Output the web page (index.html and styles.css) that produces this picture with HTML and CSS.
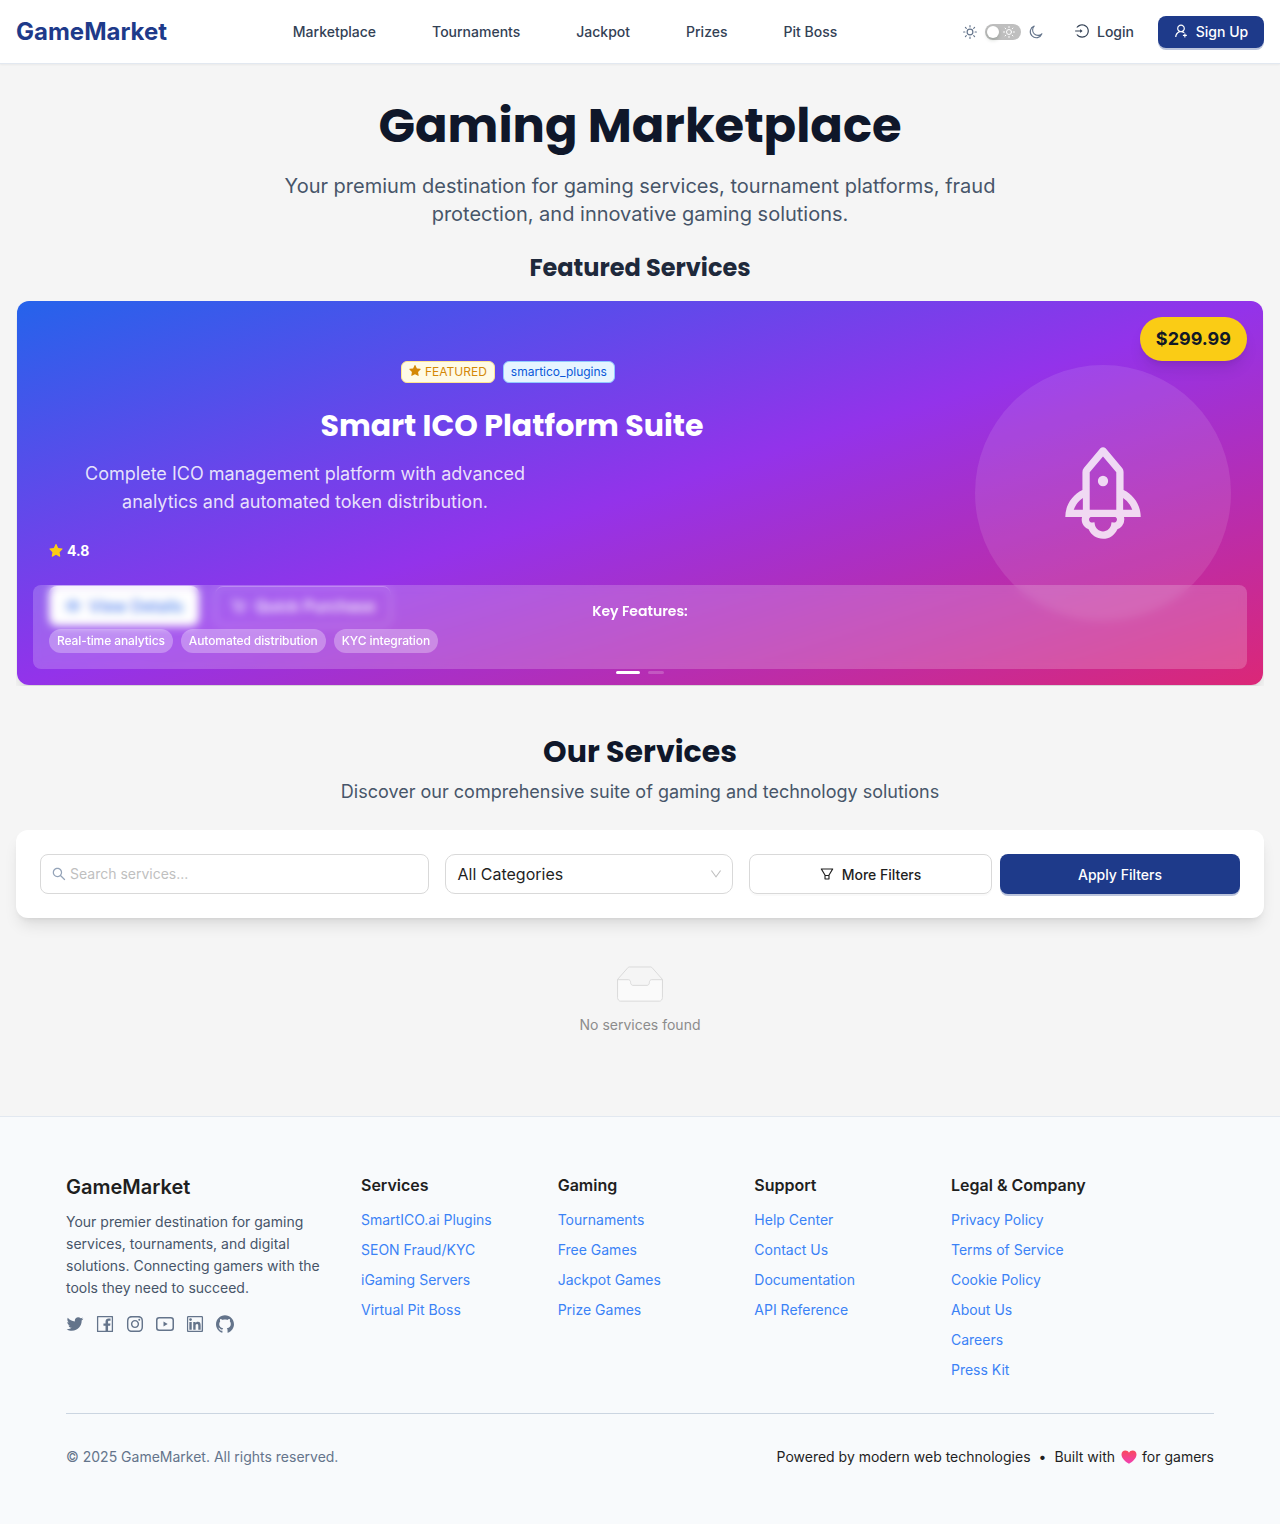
FILE: index.html
```html
<!DOCTYPE html>
<html lang="en">
<head>
<meta charset="utf-8">
<title>GameMarket</title>
<link rel="stylesheet" href="styles.css">
</head>
<body>
<svg class="sprite" aria-hidden="true">
  <symbol id="star" viewBox="64 64 896 896"><path d="M908.1 353.1l-253.9-36.9L540.7 86.1c-3.1-6.3-8.2-11.4-14.5-14.5-15.8-7.8-35-1.3-42.9 14.5L369.8 316.2l-253.9 36.9c-7 1-13.4 4.3-18.3 9.3a32.05 32.05 0 00.6 45.3l183.7 179.1-43.4 252.9a31.95 31.95 0 0046.4 33.7L512 754l227.1 119.4c6.2 3.3 13.4 4.4 20.3 3.2 17.4-3 29.1-19.5 26.1-36.9l-43.4-252.9 183.7-179.1c5-4.9 8.3-11.3 9.3-18.3 2.7-17.5-9.5-33.7-27-36.3z"/></symbol>
  <symbol id="sun" viewBox="0 0 14 14"><g fill="none" stroke="currentColor" stroke-width="1.15" stroke-linecap="round"><circle cx="7" cy="7" r="2.9"/><path d="M7 .6v1.3M7 12.1v1.3M.6 7h1.3M12.1 7h1.3M2.4 2.4l.9.9M10.7 10.7l.9.9M2.4 11.6l.9-.9M10.7 3.3l.9-.9"/></g></symbol>
  <symbol id="moon" viewBox="0 0 14 14"><path d="M5.2 1.1A6 6 0 1 0 12.9 8.8A5 5 0 0 1 5.2 1.1z" fill="none" stroke="currentColor" stroke-width="1.1" stroke-linejoin="round"/></symbol>
</svg>
<header class="header">
  <a class="logo">GameMarket</a>
  <nav class="nav"><a>Marketplace</a><a>Tournaments</a><a>Jackpot</a><a>Prizes</a><a>Pit Boss</a></nav>
  <div class="actions">
    <div class="theme">
      <svg class="i14"><use href="#sun"/></svg>
      <span class="switch"><span class="knob"></span><svg class="i12"><use href="#sun"/></svg></span>
      <svg class="i14"><use href="#moon"/></svg>
    </div>
    <a class="login"><svg class="i14" viewBox="64 64 896 896"><path d="M521.7 82c-152.5-.4-286.7 78.5-363.4 197.7-3.4 5.3.4 12.3 6.7 12.3h70.3c4.8 0 9.3-2.1 12.3-5.8 7-8.5 14.5-16.7 22.4-24.5 32.6-32.5 70.5-58.1 112.7-75.9 43.6-18.4 90-27.8 137.9-27.8 47.9 0 94.3 9.3 137.9 27.8 42.2 17.8 80.1 43.4 112.7 75.9 32.6 32.5 58.1 70.4 76 112.5C865.7 417.8 875 464.1 875 512c0 47.9-9.4 94.2-27.8 137.8-17.8 42.1-43.4 80-76 112.5s-70.5 58.1-112.7 75.9A352.8 352.8 0 01520.6 866c-47.9 0-94.3-9.4-137.9-27.8A353.84 353.84 0 01270 762.3c-7.9-7.9-15.3-16.1-22.4-24.5-3-3.7-7.6-5.8-12.3-5.8H165c-6.3 0-10.2 7-6.7 12.3C234.9 863.2 368.5 942 520.6 942c236.2 0 428-190.1 430.4-425.6C953.4 277.1 761.3 82.6 521.7 82zM395.02 624v-76h-314c-4.4 0-8-3.6-8-8v-56c0-4.4 3.6-8 8-8h314v-76c0-6.7 7.8-10.5 13-6.3l141.9 112a8 8 0 010 12.6l-141.9 112c-5.2 4.1-13 .4-13-6.3z"/></svg><span>Login</span></a>
    <a class="btn primary signup"><svg class="i14" viewBox="64 64 896 896"><path d="M678.3 642.4c24.2-13 51.9-20.4 81.4-20.4h.1c3 0 4.4-3.6 2.2-5.6a371.67 371.67 0 00-103.7-65.8c-.4-.2-.8-.3-1.2-.5C719.2 505 759.6 431.7 759.6 349c0-137-110.8-248-247.5-248S264.7 212 264.7 349c0 82.7 40.4 156 102.6 201.1-.4.2-.8.3-1.2.5-44.7 18.9-84.8 46-119.3 80.6a373.42 373.42 0 00-80.4 119.5A373.6 373.6 0 00137 888.8a8 8 0 008 8.2h59.9c4.3 0 7.9-3.5 8-7.8 2-77.2 32.9-149.5 87.6-204.3C357 628.2 432.2 597 512.2 597c56.7 0 111.1 15.7 158 45.1a8.1 8.1 0 008.1.3zM512.2 521c-45.8 0-88.9-17.9-121.4-50.4A171.2 171.2 0 01340.5 349c0-45.9 17.9-89.1 50.3-121.6S466.3 177 512.2 177s88.9 17.9 121.4 50.4A171.2 171.2 0 01683.9 349c0 45.9-17.9 89.1-50.3 121.6C601.1 503.1 558 521 512.2 521zM880 759h-84v-84c0-4.4-3.6-8-8-8h-56c-4.4 0-8 3.6-8 8v84h-84c-4.4 0-8 3.6-8 8v56c0 4.4 3.6 8 8 8h84v84c0 4.4 3.6 8 8 8h56c4.4 0 8-3.6 8-8v-84h84c4.4 0 8-3.6 8-8v-56c0-4.4-3.6-8-8-8z"/></svg><span>Sign Up</span></a>
  </div>
</header>
<main class="main">
  <h1 class="title">Gaming Marketplace</h1>
  <p class="lead">Your premium destination for gaming services, tournament platforms, fraud protection, and innovative gaming solutions.</p>
  <h2 class="featured-title">Featured Services</h2>
  <section class="carousel">
    <article class="slide">
      <div class="info">
        <div class="tags">
          <span class="tag gold"><svg class="i12"><use href="#star"/></svg>FEATURED</span>
          <span class="tag blue">smartico_plugins</span>
        </div>
        <h3 class="slide-title">Smart ICO Platform Suite</h3>
        <p class="slide-text">Complete ICO management platform with advanced analytics and automated token distribution.</p>
        <div class="rating"><svg class="i14"><use href="#star"/></svg><span>4.8</span></div>
        <div class="cta">
          <a class="view"><svg class="i16" viewBox="0 0 16 16"><path d="M1 8s2.500-4.500 7-4.500S15 8 15 8s-2.500 4.500-7 4.500S1 8 1 8z" fill="none" stroke="currentColor" stroke-width="1.300"/><circle cx="8" cy="8" r="2.300" fill="none" stroke="currentColor" stroke-width="1.300"/></svg>View Details</a>
          <a class="buy"><svg class="i16" viewBox="0 0 16 16"><path d="M1 2h2l1.500 8.500h8L14 4.500H3.700" fill="none" stroke="currentColor" stroke-width="1.300"/><circle cx="6" cy="13.300" r="1.200"/><circle cx="11.500" cy="13.300" r="1.200"/></svg>Quick Purchase</a>
        </div>
      </div>
      <div class="disc"><svg class="rocket" viewBox="64 64 896 896"><path d="M864 736c0-111.6-65.4-208-160-252.9V317.3c0-15.1-5.3-29.7-15.1-41.2L536.5 95.4C530.1 87.8 521 84 512 84s-18.1 3.8-24.5 11.4L335.1 276.1a63.97 63.97 0 00-15.1 41.2v165.800C225.4 528 160 624.4 160 736h156.5c-2.3 7.2-3.5 15-3.5 23.8 0 22.1 7.6 43.7 21.4 60.800a97.2 97.2 0 0043.1 30.6c23.1 54 75.6 88.8 134.5 88.8 29.1 0 57.3-8.6 81.4-24.8 23.6-15.8 41.9-37.9 53-64a97 97 0 0043.1-30.5 97.52 97.52 0 0021.4-60.8c0-8.4-1.1-16.4-3.1-23.8H864zM762.3 621.4c9.4 14.6 17 30.3 22.5 46.6H700V558.7a211.6 211.6 0 0162.3 62.7zM388 483.1V318.8l124-147 124 147V668H388V483.1zM239.2 668c5.5-16.3 13.1-32 22.5-46.6 16.3-25.2 37.5-46.5 62.3-62.7V668h-84.8zm388.9 116.2c-5.2 3-11.2 4.2-17.1 3.4l-19.5-2.4-2.8 19.4c-5.4 37.9-38.4 66.5-76.7 66.5-38.3 0-71.3-28.6-76.7-66.5l-2.8-19.5-19.5 2.5a27.7 27.7 0 01-17.1-3.5c-8.7-5-14.1-14.3-14.1-24.4 0-10.6 5.9-19.4 14.6-23.8h231.3c8.8 4.5 14.6 13.3 14.6 23.8-.1 10.2-5.5 19.6-14.2 24.5zM464 400a48 48 0 1096 0 48 48 0 10-96 0z"/></svg></div>
      <div class="price">$299.99</div>
      <div class="features">
        <h4 class="features-title">Key Features:</h4>
        <div class="pills"><span>Real-time analytics</span><span>Automated distribution</span><span>KYC integration</span></div>
      </div>
      <div class="dots"><i class="on"></i><i></i></div>
    </article>
  </section>
  <h2 class="services-title">Our Services</h2>
  <p class="services-text">Discover our comprehensive suite of gaming and technology solutions</p>
  <section class="filters">
    <div class="field search"><svg class="i14" viewBox="64 64 896 896"><path d="M909.6 854.5L649.9 594.8C690.2 542.7 712 479 712 412c0-80.2-31.3-155.4-87.9-212.1-56.6-56.7-132-87.9-212.1-87.9s-155.5 31.3-212.1 87.9C143.2 256.5 112 331.8 112 412c0 80.1 31.3 155.5 87.9 212.1C256.5 680.8 331.8 712 412 712c67 0 130.6-21.8 182.7-62l259.7 259.6a8.2 8.2 0 0011.6 0l43.6-43.5a8.2 8.2 0 000-11.6zM570.4 570.4C528 612.7 471.8 636 412 636s-116-23.3-158.4-65.6C211.3 528 188 471.8 188 412s23.3-116.1 65.6-158.4C296 211.3 352.2 188 412 188s116.1 23.2 158.4 65.6S636 352.2 636 412s-23.3 116.1-65.6 158.4z"/></svg><span>Search services...</span></div>
    <div class="field select"><span>All Categories</span><svg class="i12" viewBox="64 64 896 896"><path d="M884 256h-75c-5.1 0-9.9 2.5-12.9 6.6L512 654.2 227.9 262.6c-3-4.1-7.8-6.6-12.9-6.6h-75c-6.5 0-10.3 7.4-6.5 12.7l352.6 486.1c12.8 17.6 39 17.6 51.7 0l352.6-486.1c3.9-5.3.1-12.7-6.4-12.7z"/></svg></div>
    <div class="buttons">
      <a class="btn plain"><svg class="i14" viewBox="64 64 896 896"><path d="M880.1 154H143.9c-24.5 0-39.8 26.7-27.5 48L349 597.4V838c0 17.7 14.2 32 31.8 32h262.4c17.6 0 31.8-14.3 31.8-32V597.4L907.7 202c12.2-21.3-3.1-48-27.6-48zM603.4 798H420.6V642h182.9v156zm9.6-236.6l-9.5 16.6h-183l-9.5-16.6L212.7 226h598.6L613 561.4z"/></svg><span>More Filters</span></a>
      <a class="btn primary apply"><span>Apply Filters</span></a>
    </div>
  </section>
  <div class="empty">
    <svg width="64" height="40" viewBox="0 0 64 41"><g transform="translate(0 1)" fill="none" stroke="#d9d9d9"><path d="M55 12.76L44.854 1.258C44.367.474 43.656 0 42.907 0H21.093c-.749 0-1.46.474-1.947 1.257L9 12.761V22h46v-9.24z"/><path fill="#fafafa" d="M41.613 15.931c0-1.605.994-2.93 2.227-2.931H55v18.137C55 33.26 53.68 35 52.05 35h-40.1C10.32 35 9 33.259 9 31.137V13h11.16c1.233 0 2.227 1.323 2.227 2.928v.022c0 1.605 1.005 2.901 2.237 2.901h14.752c1.232 0 2.237-1.308 2.237-2.913v-.007z"/></g></svg>
    <span>No services found</span>
  </div>
</main>
<footer class="footer">
  <div class="columns">
    <div>
      <h4 class="brand">GameMarket</h4>
      <p class="about">Your premier destination for gaming services, tournaments, and digital solutions. Connecting gamers with the tools they need to succeed.</p>
      <div class="social">
        <svg viewBox="64 64 896 896"><path d="M928 254.3c-30.6 13.2-63.9 22.7-98.2 26.4a170.1 170.1 0 0075-94 336.64 336.64 0 01-108.2 41.2A170.1 170.1 0 00672 174c-94.5 0-170.5 76.6-170.5 170.6 0 13.2 1.6 26.4 4.2 39.1-141.5-7.4-267.7-75-351.6-178.5a169.32 169.32 0 00-23.2 86.1c0 59.2 30.1 111.4 76 142.1a172 172 0 01-77.1-21.7v2.1c0 82.9 58.6 151.6 136.7 167.4a180.6 180.6 0 01-44.9 5.8c-11.1 0-21.6-1.1-32.2-2.6C211 652 273.9 701.1 348.8 702.7c-58.6 45.9-132 72.9-211.7 72.9-14.3 0-27.5-.5-41.2-2.1C171.5 822 261.2 850 357.8 850 671.4 850 843 590.2 843 364.7c0-7.4 0-14.8-.5-22.2 33.2-24.3 62.3-54.4 85.500-88.200z"/></svg>
        <svg viewBox="64 64 896 896"><path d="M880 112H144c-17.7 0-32 14.3-32 32v736c0 17.7 14.3 32 32 32h736c17.7 0 32-14.3 32-32V144c0-17.7-14.3-32-32-32zm-32 736H663.900V602.200h104l15.600-120.700H663.900v-77.100c0-35 9.700-58.800 59.800-58.800h63.900v-108c-11.100-1.500-49-4.800-93.200-4.800-92.200 0-155.300 56.300-155.300 159.600v89H434.900v120.700h104.300V848H176V176h672v672z"/></svg>
        <svg viewBox="64 64 896 896"><path d="M512 306.9c-113.5 0-205.1 91.6-205.1 205.1S398.5 717.1 512 717.1 717.1 625.5 717.1 512 625.5 306.9 512 306.9zm0 338.4c-73.4 0-133.3-59.9-133.3-133.3S438.6 378.7 512 378.7 645.3 438.6 645.3 512 585.4 645.3 512 645.3zm213.5-394.6c-26.5 0-47.9 21.4-47.9 47.9s21.4 47.9 47.9 47.9 47.9-21.3 47.9-47.9a47.84 47.84 0 00-47.9-47.9zM911.8 512c0-55.2.5-109.9-2.6-165-3.1-64-17.7-120.8-64.5-167.6-46.9-46.9-103.6-61.4-167.6-64.5-55.2-3.1-109.9-2.6-165-2.6-55.2 0-109.9-.5-165 2.6-64 3.1-120.8 17.7-167.6 64.5C132.6 226.3 118.1 283 115 347c-3.1 55.2-2.6 109.900-2.600 165s-.5 109.900 2.600 165c3.100 64 17.700 120.800 64.500 167.600 46.900 46.900 103.600 61.400 167.600 64.500 55.200 3.100 109.900 2.600 165 2.600 55.200 0 109.900.5 165-2.600 64-3.100 120.800-17.700 167.600-64.500 46.900-46.900 61.400-103.600 64.500-167.600 3.200-55.100 2.600-109.800 2.600-165zm-88 235.800c-7.300 18.200-16.100 31.800-30.200 45.800-14.100 14.100-27.600 22.900-45.800 30.200C695.2 844.7 570.3 840 512 840c-58.3 0-183.3 4.7-235.9-16.1-18.2-7.3-31.8-16.1-45.8-30.2-14.1-14.1-22.9-27.6-30.2-45.8C179.3 695.2 184 570.3 184 512c0-58.3-4.700-183.300 16.100-235.900 7.300-18.200 16.100-31.800 30.200-45.800s27.600-22.900 45.800-30.100C328.700 179.300 453.700 184 512 184s183.300-4.700 235.900 16.100c18.200 7.300 31.800 16.100 45.800 30.200 14.100 14.100 22.900 27.600 30.200 45.800C844.700 328.700 840 453.700 840 512c0 58.300 4.700 183.200-16.200 235.800z"/></svg>
        <svg viewBox="64 64 896 896"><rect x="102" y="202" width="820" height="620" rx="120" fill="none" stroke="currentColor" stroke-width="76"/><path d="M436 387l210 122-210 124z"/></svg>
        <svg viewBox="64 64 896 896"><path d="M847.7 112H176.3c-35.5 0-64.3 28.8-64.3 64.3v671.4c0 35.5 28.8 64.3 64.3 64.3h671.4c35.5 0 64.3-28.8 64.3-64.3V176.3c0-35.5-28.8-64.3-64.3-64.3zm0 736c-447.8-.1-671.7-.2-671.7-.3.1-447.8.2-671.7.3-671.7 447.8.1 671.7.2 671.7.3-.1 447.8-.2 671.7-.3 671.7zM230.6 411.9h118.7v381.8H230.6zm59.4-52.2c37.9 0 68.8-30.8 68.8-68.8a68.8 68.8 0 10-137.6 0c-.1 38 30.7 68.8 68.8 68.8zm252.3 245.1c0-49.8 9.5-98 71.2-98 60.8 0 61.7 56.9 61.7 101.2v185.7h118.6V584.3c0-102.8-22.2-181.9-142.3-181.9-57.7 0-96.4 31.7-112.3 61.7h-1.6v-52.2H423.7v381.8h118.6V604.8z"/></svg>
        <svg viewBox="64 64 896 896"><path d="M511.6 76.3C264.3 76.2 64 276.4 64 523.5 64 718.9 189.3 885 363.8 946c23.5 5.9 19.9-10.8 19.9-22.2v-77.5c-135.7 15.9-141.2-73.9-150.3-88.9C215 726 171.5 718 184.5 703c30.9-15.9 62.4 4 98.9 57.9 26.4 39.1 77.9 32.5 104 26 5.7-23.5 17.9-44.5 34.7-60.8-140.6-25.2-199.2-111-199.2-213 0-49.5 16.3-95 48.3-131.7-20.4-60.5 1.9-112.3 4.9-120 58.1-5.2 118.5 41.6 123.2 45.3 33-8.9 70.7-13.6 112.9-13.6 42.4 0 80.2 4.9 113.5 13.9 11.3-8.6 67.3-48.8 121.3-43.9 2.9 7.7 24.7 58.3 5.5 118 32.4 36.8 48.9 82.7 48.9 132.3 0 102.2-59 188.1-200 212.9a127.5 127.5 0 0138.1 91v112.5c.8 9 0 17.9 15 17.9 177.1-59.7 304.6-227 304.6-424.1 0-247.2-200.4-447.3-447.5-447.3z"/></svg>
      </div>
    </div>
    <div class="links"><h5>Services</h5><a>SmartICO.ai Plugins</a><a>SEON Fraud/KYC</a><a>iGaming Servers</a><a>Virtual Pit Boss</a></div>
    <div class="links"><h5>Gaming</h5><a>Tournaments</a><a>Free Games</a><a>Jackpot Games</a><a>Prize Games</a></div>
    <div class="links"><h5>Support</h5><a>Help Center</a><a>Contact Us</a><a>Documentation</a><a>API Reference</a></div>
    <div class="links"><h5>Legal &amp; Company</h5><a>Privacy Policy</a><a>Terms of Service</a><a>Cookie Policy</a><a>About Us</a><a>Careers</a><a>Press Kit</a></div>
  </div>
  <div class="bottom">
    <span class="copy">© 2025 GameMarket. All rights reserved.</span>
    <span class="made"><span>Powered by modern web technologies</span><span>•</span><span class="built">Built with <svg class="heart" viewBox="0 0 16 14"><defs><linearGradient id="hg" x1="0" y1="0" x2="0" y2="1"><stop offset="0" stop-color="#f9495c"/><stop offset="1" stop-color="#f03fb4"/></linearGradient></defs><path d="M8 13.800C5 12 .5 8.700.5 4.500.5 1.800 2.300.4 4.300.4 6 .4 7.300 1.300 8 2.700 8.700 1.300 10 .4 11.700.4c2 0 3.800 1.400 3.800 4.100 0 4.200-4.500 7.500-7.500 9.300z" fill="url(#hg)"/></svg> for gamers</span></span>
  </div>
</footer>
</body>
</html>
```
FILE: styles.css
```css
* { box-sizing: border-box; }
body { margin: 0; background: #f5f5f5; color: #1f1f1f; font: 14px/22px Inter, "Liberation Sans", sans-serif; }
h1, h2, h3, h4, h5, p { margin: 0; }
svg { display: block; flex: none; fill: currentColor; }
.sprite { position: absolute; width: 0; height: 0; }
.i12 { width: 12px; height: 12px; }
.i14 { width: 14px; height: 14px; }
.i16 { width: 16px; height: 16px; }

.header { display: flex; align-items: center; justify-content: space-between; height: 64px; padding: 0 16px; background: #fff; border-bottom: 1px solid #e2e8f0; box-shadow: 0 1px 2px rgba(0, 0, 0, .05); }
.logo { font-size: 24px; line-height: 32px; font-weight: 700; color: #1e3a8a; }
.nav { display: flex; gap: 56px; font-weight: 500; color: #334155; }
.actions { display: flex; align-items: center; color: #334155; }
.theme { display: flex; align-items: center; gap: 8px; color: #64748b; }
.switch { display: flex; align-items: center; justify-content: space-between; width: 36px; height: 16px; padding: 0 6px 0 2px; border-radius: 8px; background: #bfbfbf; color: #fff; }
.knob { width: 12px; height: 12px; border-radius: 50%; background: #fff; box-shadow: 0 2px 4px rgba(0, 35, 11, .2); }
.login { display: flex; align-items: center; gap: 8px; padding: 0 24px 0 32px; font-weight: 500; }
.login svg, .signup svg { margin-top: -2px; }
.plain svg { margin-top: -3px; }
.btn { display: flex; align-items: center; justify-content: center; gap: 8px; border-radius: 8px; font-weight: 500; }
.primary { background: #1e3a8a; color: #fff; box-shadow: 0 2px 0 rgba(30, 58, 138, .3); }
.signup { width: 106px; height: 32px; }

.main { padding: 36px 16px 0; height: 1052px; text-align: center; }
.title, .featured-title, .slide-title, .features-title, .services-title { font-family: Poppins, Inter, sans-serif; }
.title { font-size: 48px; line-height: 52px; font-weight: 700; color: #0f172a; }
.lead { width: 768px; margin: 20px auto 0; font-size: 20px; line-height: 28px; color: #475569; }
.featured-title { margin-top: 24px; font-size: 24px; line-height: 32px; font-weight: 700; color: #1e293b; }
.carousel { margin-top: 16px; padding: 1px; overflow: hidden; height: 386px; }
.slide { position: relative; height: 384px; padding: 60px 32px 0; border-radius: 12px; color: #fff; background: linear-gradient(to bottom right, #2563eb, #9333ea, #db2777); box-shadow: 0 10px 15px -3px rgba(0, 0, 0, .1), 0 4px 6px -4px rgba(0, 0, 0, .1); display: flex; }
.info { width: 926px; }
.tags { display: flex; justify-content: center; gap: 8px; padding-right: 8px; }
.tag { display: flex; align-items: center; gap: 4px; height: 22px; padding: 0 7px; border: 1px solid; border-radius: 6px; font-size: 12px; }
.tag svg { margin-top: -2px; }
.gold { color: #d48806; background: #fffbe6; border-color: #ffe58f; }
.blue { color: #0958d9; background: #e6f4ff; border-color: #91caff; }
.slide-title { margin-top: 24px; font-size: 30px; line-height: 38px; font-weight: 700; }
.slide-text { width: 512px; margin-top: 15px; padding: 0 32px; font-size: 18px; line-height: 28px; color: rgba(255, 255, 255, .85); }
.rating { display: flex; align-items: center; gap: 4px; margin-top: 23px; line-height: 24px; font-weight: 700; }
.rating svg { color: #facc15; }
.cta { display: flex; gap: 16px; margin-top: 23px; font-size: 16px; font-weight: 500; }
.cta a { display: flex; align-items: center; justify-content: center; gap: 8px; height: 40px; border-radius: 8px; }
.view { width: 150px; background: #fff; color: #2563eb; }
.buy { width: 176px; border: 1px solid rgba(255, 255, 255, .6); }
.disc { display: flex; align-items: center; justify-content: center; flex: none; width: 256px; height: 256px; margin-top: 4px; border-radius: 50%; background: rgba(255, 255, 255, .1); }
.rocket { width: 96px; height: 96px; opacity: .8; }
.price { position: absolute; top: 16px; right: 16px; padding: 8px 16px; border-radius: 22px; background: #facc15; color: #111827; font-size: 18px; line-height: 28px; font-weight: 700; box-shadow: 0 10px 15px -3px rgba(0, 0, 0, .1), 0 4px 6px -4px rgba(0, 0, 0, .1); }
.features { position: absolute; left: 16px; right: 16px; bottom: 16px; height: 84px; padding: 16px; border-radius: 8px; background: rgba(255, 255, 255, .2); backdrop-filter: blur(4px); }
.features-title { font-size: 14px; line-height: 20px; font-weight: 600; }
.pills { display: flex; gap: 8px; margin-top: 8px; }
.pills span { padding: 0 8px; border-radius: 12px; background: rgba(255, 255, 255, .3); font-size: 12px; line-height: 24px; font-weight: 500; letter-spacing: -.1px; }
.dots { position: absolute; left: 0; right: 0; bottom: 11px; display: flex; justify-content: center; gap: 8px; }
.dots i { width: 16px; height: 3px; border-radius: 2px; background: rgba(255, 255, 255, .2); }
.dots .on { width: 24px; background: #fff; }

.services-title { margin-top: 48px; font-size: 30px; line-height: 36px; font-weight: 700; color: #0f172a; }
.services-text { margin-top: 8px; font-size: 18px; line-height: 28px; color: #475569; }
.filters { display: grid; grid-template-columns: 389px 288px 491px; gap: 16px; height: 88px; margin-top: 24px; padding: 24px; border-radius: 12px; background: #fff; box-shadow: 0 10px 15px -3px rgba(0, 0, 0, .1), 0 4px 6px -4px rgba(0, 0, 0, .1); }
.field { display: flex; align-items: center; padding: 0 11px; border: 1px solid #d9d9d9; border-radius: 8px; }
.search { gap: 4px; color: #bfbfbf; }
.search svg { color: #94a3b8; }
.select { justify-content: space-between; padding-right: 10px; border-radius: 10px; font-size: 16px; }
.select svg { color: #bfbfbf; }
.select span { margin-left: .5px; }
.buttons { display: grid; grid-template-columns: 243px 240px; gap: 8px; }
.plain { padding-top: 2px; border: 1px solid #d9d9d9; box-shadow: 0 2px 0 rgba(0, 0, 0, .02); }
.apply { padding-top: 2px; }
.empty { display: flex; flex-direction: column; align-items: center; gap: 8px; margin-top: 48px; color: #8c8c8c; }

.footer { height: 408px; padding: 56px 66px 0; border-top: 1px solid #e2e8f0; background: #f8fafc; }
.columns { display: grid; grid-template-columns: 263px 164.67px 164.67px 164.67px 1fr; gap: 32px; height: 240px; }
.brand { font-size: 20px; line-height: 28px; font-weight: 600; }
.about { margin-top: 10px; color: #475569; }
.social { display: flex; gap: 12px; margin-top: 16px; color: #64748b; }
.social svg { width: 18px; height: 18px; }
.links { display: flex; flex-direction: column; gap: 8px; color: #3b82f6; }
.links h5 { margin-bottom: 4px; font-size: 16px; line-height: 24px; font-weight: 600; color: #1f1f1f; }
.bottom { display: flex; justify-content: space-between; padding-top: 32px; border-top: 1px solid #cbd5e1; }
.copy { color: #64748b; }
.made, .built { display: flex; align-items: center; }
.made { gap: 8px; }
.built { gap: 5.5px; }
.heart { width: 16px; height: 14px; }
```
